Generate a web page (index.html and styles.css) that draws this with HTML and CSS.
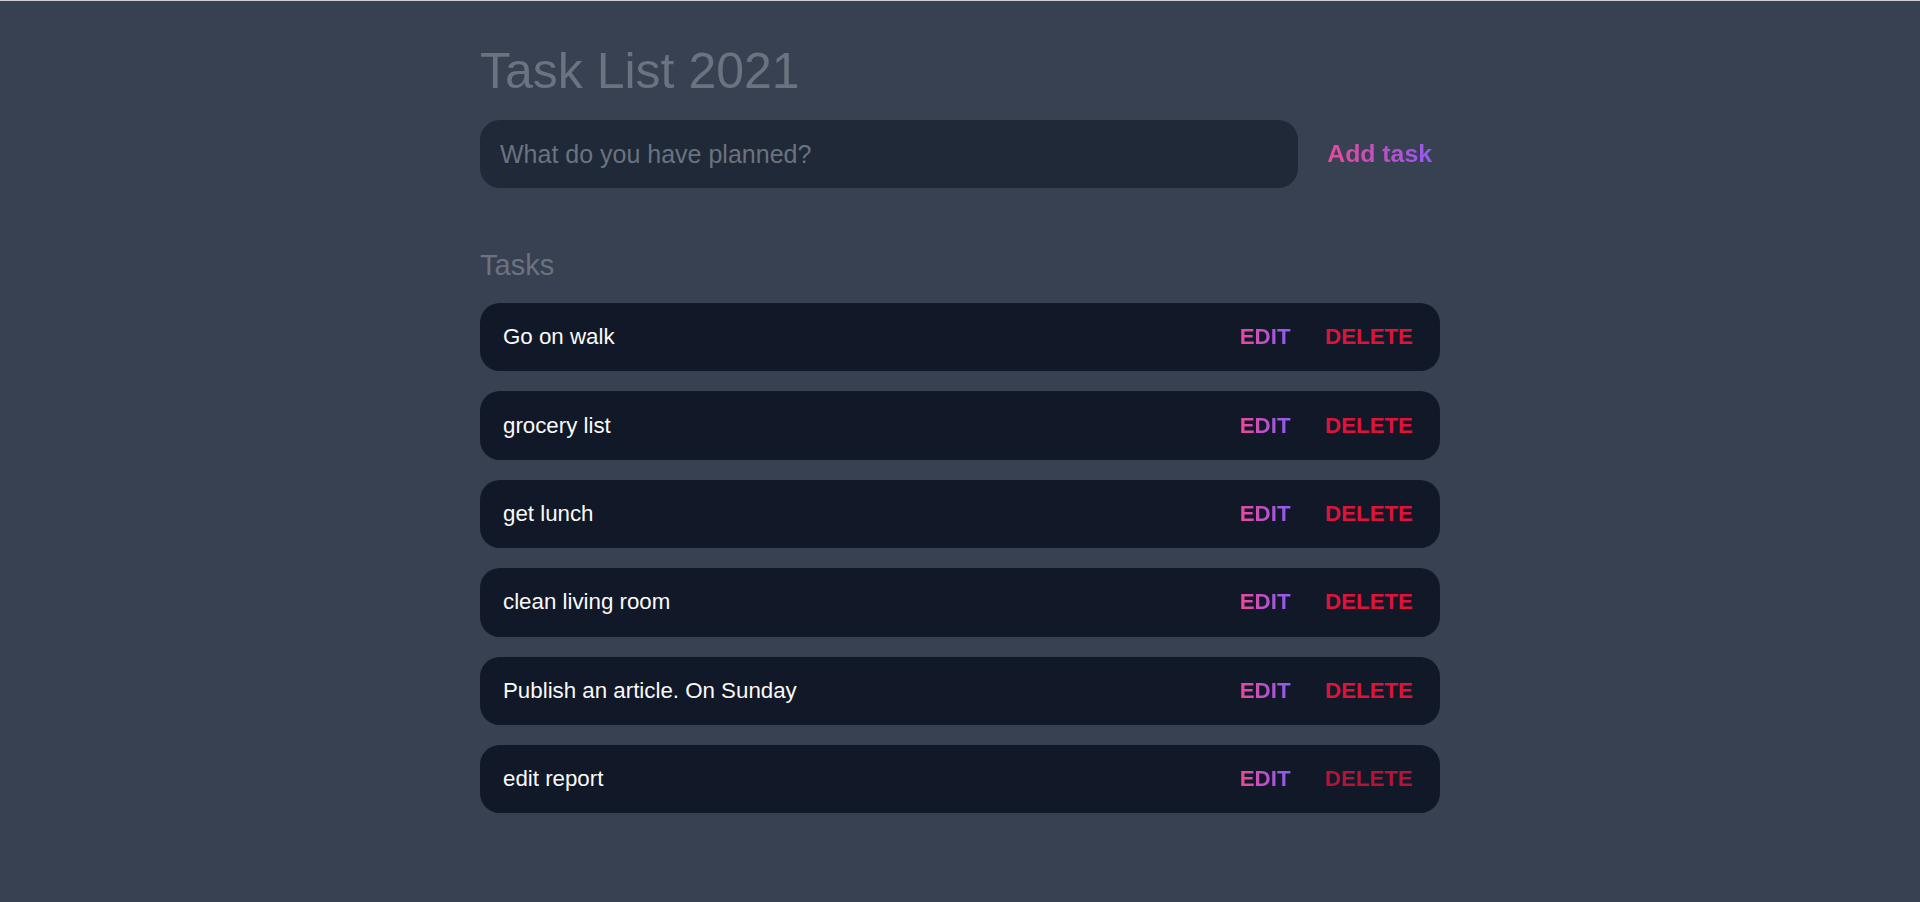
FILE: index.html
```html
<!DOCTYPE html>
<html lang="en">
<head>
<meta charset="utf-8">
<title>Task List 2021</title>
<link rel="stylesheet" href="styles.css">
</head>
<body>
<div class="topline"></div>
<main class="app">
  <header class="header">
    <h1 class="title">Task List 2021</h1>
    <form class="new-task" onsubmit="return false">
      <input class="new-task-input" type="text" placeholder="What do you have planned?">
      <button class="add-btn gradient" type="submit">Add task</button>
    </form>
  </header>
  <section class="task-list">
    <h2 class="list-title">Tasks</h2>
    <div class="tasks">
      <div class="task"><span class="task-text">Go on walk</span><div class="actions"><button class="edit gradient">EDIT</button><button class="delete">DELETE</button></div></div>
      <div class="task"><span class="task-text">grocery list</span><div class="actions"><button class="edit gradient">EDIT</button><button class="delete">DELETE</button></div></div>
      <div class="task"><span class="task-text">get lunch</span><div class="actions"><button class="edit gradient">EDIT</button><button class="delete">DELETE</button></div></div>
      <div class="task"><span class="task-text">clean living room</span><div class="actions"><button class="edit gradient">EDIT</button><button class="delete">DELETE</button></div></div>
      <div class="task"><span class="task-text">Publish an article. On Sunday</span><div class="actions"><button class="edit gradient">EDIT</button><button class="delete">DELETE</button></div></div>
      <div class="task"><span class="task-text">edit report</span><div class="actions"><button class="edit gradient">EDIT</button><button class="delete hovered">DELETE</button></div></div>
    </div>
  </section>
</main>
</body>
</html>
```

FILE: styles.css
```css
* { box-sizing: border-box; }

html, body {
  margin: 0;
  padding: 0;
}

body {
  background: #374151;
  min-height: 100vh;
  font-family: "Liberation Sans", Arial, sans-serif;
  color: #f9fafb;
}

.topline {
  height: 1px;
  background: #cfd0d3;
}

.app {
  width: 960px;
  margin: 0 auto;
  padding-top: 42px;
}

.title {
  margin: 0;
  font-size: 50px;
  line-height: 57px;
  font-weight: 400;
  color: #6b7280;
}

.new-task {
  display: flex;
  align-items: center;
  margin-top: 20px;
}

.new-task-input {
  flex: 1;
  height: 68px;
  border: none;
  outline: none;
  border-radius: 20px;
  background: #1f2937;
  padding: 0 20px;
  font-family: inherit;
  font-size: 25px;
  color: #f9fafb;
}

.new-task-input::placeholder {
  color: #6b7280;
}

.gradient {
  background: linear-gradient(to right, #ec4899, #8b5cf6);
  -webkit-background-clip: text;
  background-clip: text;
  color: transparent;
}

.add-btn {
  margin-left: 29px;
  padding: 0 8px 0 0;
  border: none;
  font-family: inherit;
  font-size: 24.8px;
  font-weight: 700;
  cursor: pointer;
}

.list-title {
  margin: 61px 0 0;
  font-size: 29px;
  line-height: 33px;
  font-weight: 400;
  color: #6b7280;
}

.tasks {
  display: flex;
  flex-direction: column;
  gap: 20px;
  margin-top: 21px;
}

.task {
  display: flex;
  align-items: center;
  justify-content: space-between;
  height: 68.4px;
  padding: 0 27px 0 23px;
  border-radius: 20px;
  background: #111827;
}

.task-text {
  font-size: 22.3px;
  color: #f9fafb;
}

.actions {
  display: flex;
  align-items: center;
  gap: 34.5px;
}

.actions button {
  border: none;
  padding: 0;
  font-family: inherit;
  font-size: 22.3px;
  font-weight: 700;
  cursor: pointer;
}

.delete {
  background: none;
  color: #dc143c;
}

.delete.hovered {
  opacity: 0.8;
}
```
